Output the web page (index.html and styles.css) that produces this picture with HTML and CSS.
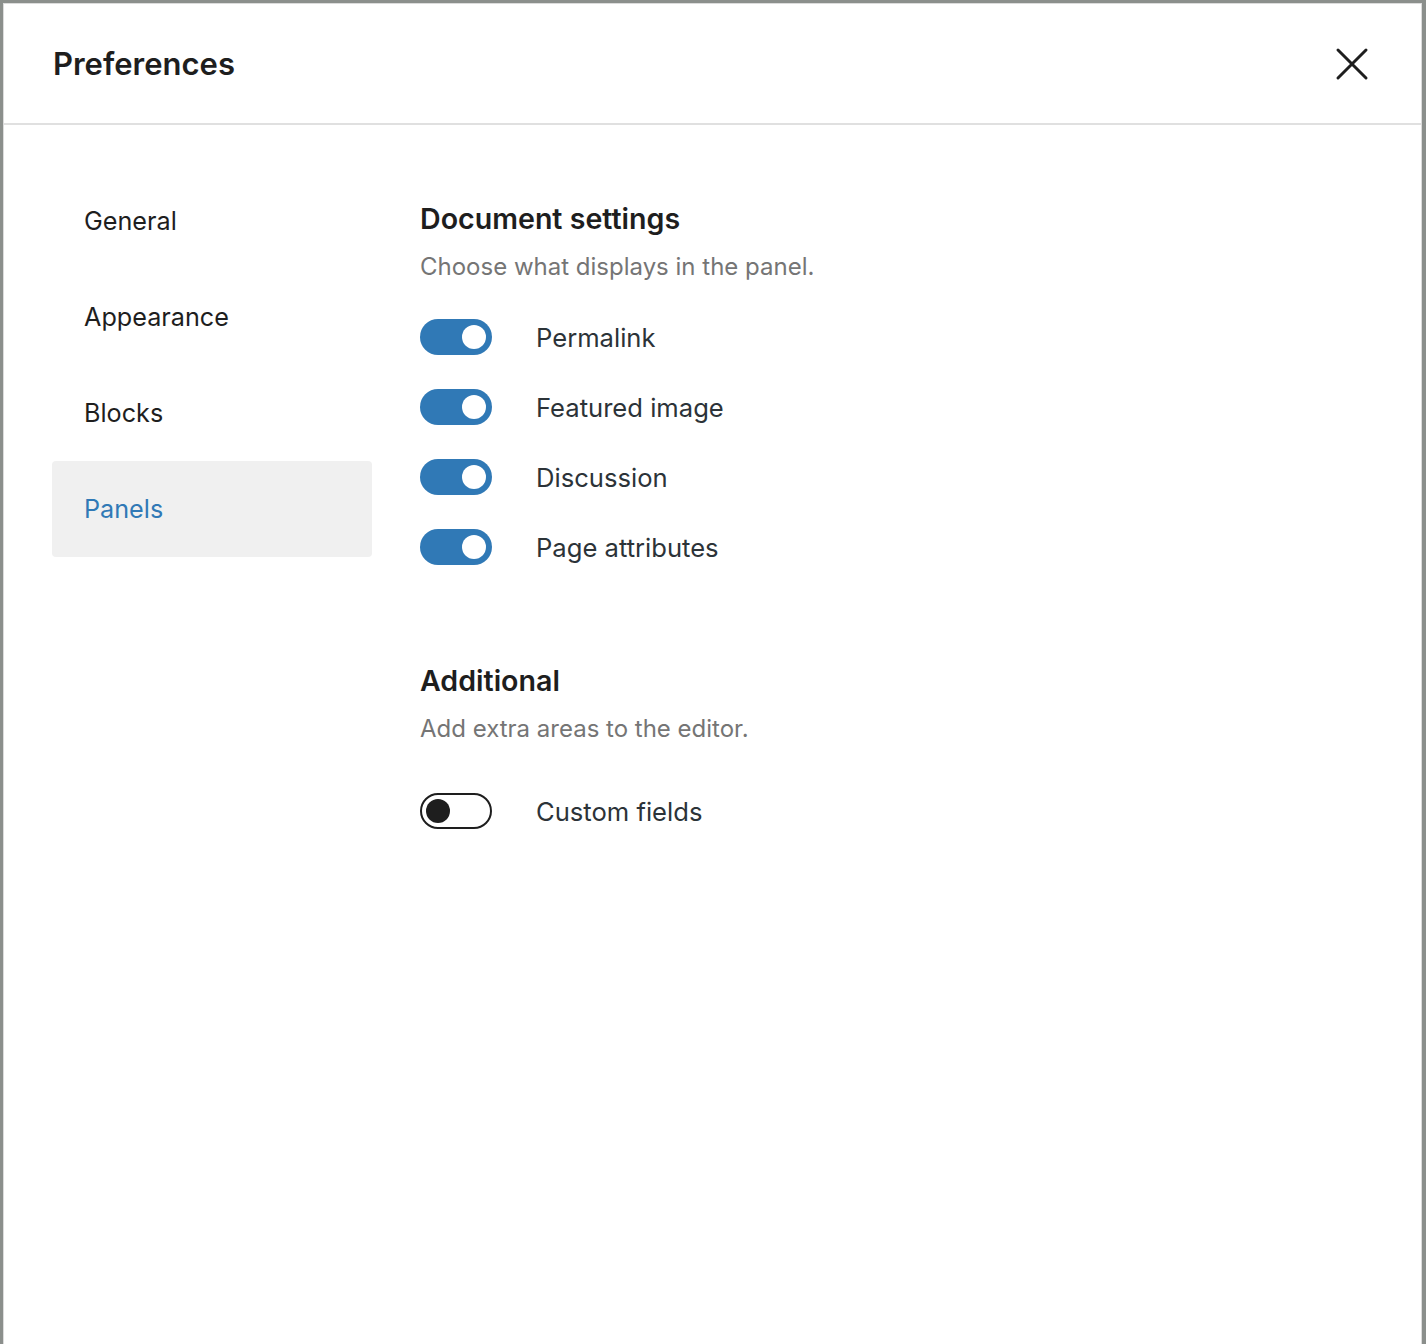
FILE: index.html
```html
<!DOCTYPE html>
<html lang="en">
<head>
<meta charset="utf-8">
<title>Preferences</title>
<link rel="stylesheet" href="styles.css">
</head>
<body>
<div class="modal">
  <header class="modal-header">
    <h1 class="modal-title">Preferences</h1>
    <button class="close-btn" aria-label="Close">
      <svg width="48" height="48" viewBox="0 0 48 48" aria-hidden="true">
        <path d="M10 10 L38 38 M38 10 L10 38" stroke="#1e1e1e" stroke-width="3" stroke-linecap="round" fill="none"/>
      </svg>
    </button>
  </header>
  <div class="modal-body">
    <nav class="sidebar">
      <div class="nav-item">General</div>
      <div class="nav-item">Appearance</div>
      <div class="nav-item">Blocks</div>
      <div class="nav-item is-active">Panels</div>
    </nav>
    <main class="content">
      <section class="section">
        <h2 class="section-title">Document settings</h2>
        <p class="section-desc">Choose what displays in the panel.</p>
        <div class="toggles">
          <div class="toggle-row"><span class="toggle on"><span class="knob"></span></span><span class="label">Permalink</span></div>
          <div class="toggle-row"><span class="toggle on"><span class="knob"></span></span><span class="label">Featured image</span></div>
          <div class="toggle-row"><span class="toggle on"><span class="knob"></span></span><span class="label">Discussion</span></div>
          <div class="toggle-row"><span class="toggle on"><span class="knob"></span></span><span class="label">Page attributes</span></div>
        </div>
      </section>
      <section class="section section-additional">
        <h2 class="section-title">Additional</h2>
        <p class="section-desc">Add extra areas to the editor.</p>
        <div class="toggles toggles-additional">
          <div class="toggle-row"><span class="toggle off"><span class="knob"></span></span><span class="label">Custom fields</span></div>
        </div>
      </section>
    </main>
  </div>
</div>
</body>
</html>
```
FILE: styles.css
```css
* { box-sizing: border-box; }
html, body { margin: 0; padding: 0; }
body {
  background: #8b8f8c;
  font-family: Inter, "Noto Sans", sans-serif;
  color: #1e1e1e;
  height: 1344px;
  overflow: hidden;
}
.modal {
  margin: 3px 4px 0 3px;
  height: 1341px;
  background: #fff;
  border: 1px solid #dcdcdc;
  border-bottom: none;
  display: flex;
  flex-direction: column;
}
.modal-header {
  height: 121px;
  flex: 0 0 auto;
  border-bottom: 2px solid #e0e0e0;
  display: flex;
  align-items: center;
  justify-content: space-between;
  padding: 0 45px 0 49px;
}
.modal-title {
  margin: 0;
  font-size: 31px;
  font-weight: 600;
  color: #1e1e1e;
  line-height: 40px;
}
.close-btn {
  border: 0;
  background: transparent;
  padding: 0;
  width: 48px;
  height: 48px;
  display: flex;
}
.modal-body {
  display: flex;
  flex: 1 1 auto;
}
.sidebar {
  width: 368px;
  padding: 48px 0 0 48px;
  flex: 0 0 auto;
  display: flex;
  flex-direction: column;
}
.nav-item {
  height: 96px;
  display: flex;
  align-items: center;
  padding-left: 32px;
  font-size: 25.2px;
  color: #1e1e1e;
  border-radius: 4px;
}
.nav-item.is-active {
  background: #f0f0f0;
  color: #3079b6;
}
.content {
  padding: 74px 0 0 48px;
  flex: 1 1 auto;
}
.section-title {
  margin: 0;
  font-size: 28.6px;
  font-weight: 600;
  line-height: 40px;
  color: #1e1e1e;
}
.section-desc {
  margin: 10px 0 0;
  font-size: 24px;
  line-height: 36px;
  color: #757575;
}
.toggles {
  margin-top: 34px;
  display: flex;
  flex-direction: column;
  gap: 34px;
}
.toggles-additional { margin-top: 46px; }
.section-additional { margin-top: 96px; }
.toggle-row {
  display: flex;
  align-items: center;
  height: 36px;
}
.toggle {
  width: 72px;
  height: 36px;
  border-radius: 18px;
  position: relative;
  flex: 0 0 auto;
}
.toggle.on { background: #3079b6; }
.toggle.off { background: #fff; border: 2px solid #1e1e1e; }
.knob {
  position: absolute;
  width: 24px;
  height: 24px;
  border-radius: 50%;
  top: 6px;
}
.toggle.on .knob { background: #fff; right: 6px; }
.toggle.off .knob { background: #1e1e1e; left: 4px; top: 4px; }
.label {
  margin-left: 44px;
  font-size: 25.6px;
  color: #2c3338;
}
```
